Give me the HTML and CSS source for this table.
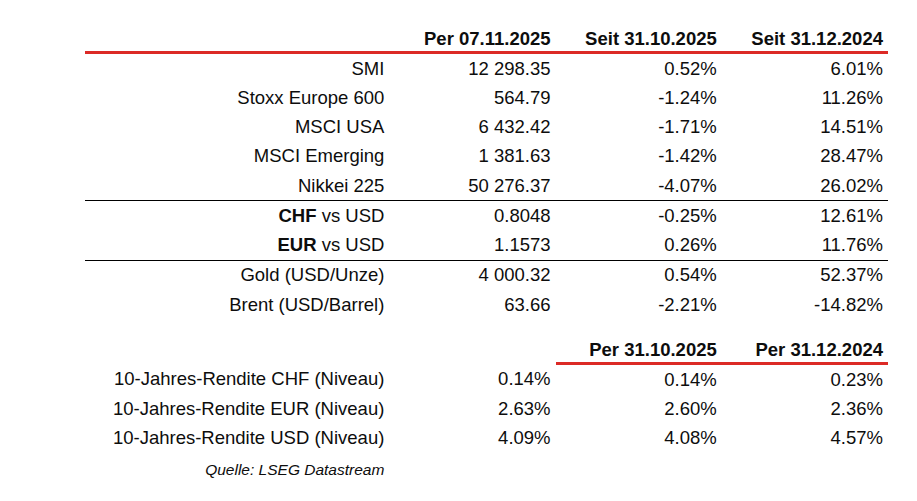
FILE: index.html
```html
<!DOCTYPE html>
<html lang="de">
<head>
<meta charset="utf-8">
<title>Marktübersicht</title>
<link rel="stylesheet" href="styles.css">
</head>
<body>
<main class="page">
  <table class="tbl">
    <colgroup>
      <col class="c-label"><col class="c-num"><col class="c-num"><col class="c-num">
    </colgroup>
    <thead>
      <tr class="head red">
        <th></th><th>Per 07.11.2025</th><th>Seit 31.10.2025</th><th>Seit 31.12.2024</th>
      </tr>
    </thead>
    <tbody>
      <tr><td>SMI</td><td>12 298.35</td><td>0.52%</td><td>6.01%</td></tr>
      <tr><td>Stoxx Europe 600</td><td>564.79</td><td>-1.24%</td><td>11.26%</td></tr>
      <tr><td>MSCI USA</td><td>6 432.42</td><td>-1.71%</td><td>14.51%</td></tr>
      <tr><td>MSCI Emerging</td><td>1 381.63</td><td>-1.42%</td><td>28.47%</td></tr>
      <tr><td>Nikkei 225</td><td>50 276.37</td><td>-4.07%</td><td>26.02%</td></tr>
      <tr class="rule"><td><b>CHF</b> vs USD</td><td>0.8048</td><td>-0.25%</td><td>12.61%</td></tr>
      <tr><td><b>EUR</b> vs USD</td><td>1.1573</td><td>0.26%</td><td>11.76%</td></tr>
      <tr class="rule"><td>Gold (USD/Unze)</td><td>4 000.32</td><td>0.54%</td><td>52.37%</td></tr>
      <tr><td>Brent (USD/Barrel)</td><td>63.66</td><td>-2.21%</td><td>-14.82%</td></tr>
    </tbody>
  </table>

  <table class="tbl tbl-yield">
    <colgroup>
      <col class="c-label"><col class="c-num"><col class="c-num"><col class="c-num">
    </colgroup>
    <thead>
      <tr class="head">
        <th class="blank"></th><th class="blank"></th><th class="redcell">Per 31.10.2025</th><th class="redcell">Per 31.12.2024</th>
      </tr>
    </thead>
    <tbody>
      <tr><td>10-Jahres-Rendite CHF (Niveau)</td><td>0.14%</td><td>0.14%</td><td>0.23%</td></tr>
      <tr><td>10-Jahres-Rendite EUR (Niveau)</td><td>2.63%</td><td>2.60%</td><td>2.36%</td></tr>
      <tr><td>10-Jahres-Rendite USD (Niveau)</td><td>4.09%</td><td>4.08%</td><td>4.57%</td></tr>
      <tr class="source"><td>Quelle: LSEG Datastream</td><td></td><td></td><td></td></tr>
    </tbody>
  </table>
</main>
</body>
</html>
```

FILE: styles.css
```css
html, body {
  margin: 0;
  padding: 0;
  background: #ffffff;
}

.page {
  padding: 23px 0 0 85px;
  font-family: "Liberation Sans", Arial, sans-serif;
  color: #0d0d0d;
}

.tbl {
  border-collapse: collapse;
  table-layout: fixed;
  width: 803px;
  font-size: 18.5px;
}

.c-label { width: 304px; }
.c-num { width: 166px; }

.tbl th,
.tbl td {
  text-align: right;
  padding: 0 5px 0 0;
  white-space: nowrap;
}

.tbl td {
  height: 29.25px;
  vertical-align: middle;
}

.tbl th {
  height: 27px;
  vertical-align: bottom;
  padding-bottom: 1px;
  font-weight: bold;
}

.tbl .red th,
.tbl .redcell {
  border-bottom: 3px solid #dc2a26;
}

.tbl .rule td {
  border-top: 1px solid #000000;
}

.tbl b {
  font-weight: bold;
}

.tbl-yield {
  margin-top: 15px;
}

.tbl-yield td {
  height: 29px;
}

.tbl .source td {
  height: 35px;
  font-size: 15.5px;
  font-style: italic;
}
```
